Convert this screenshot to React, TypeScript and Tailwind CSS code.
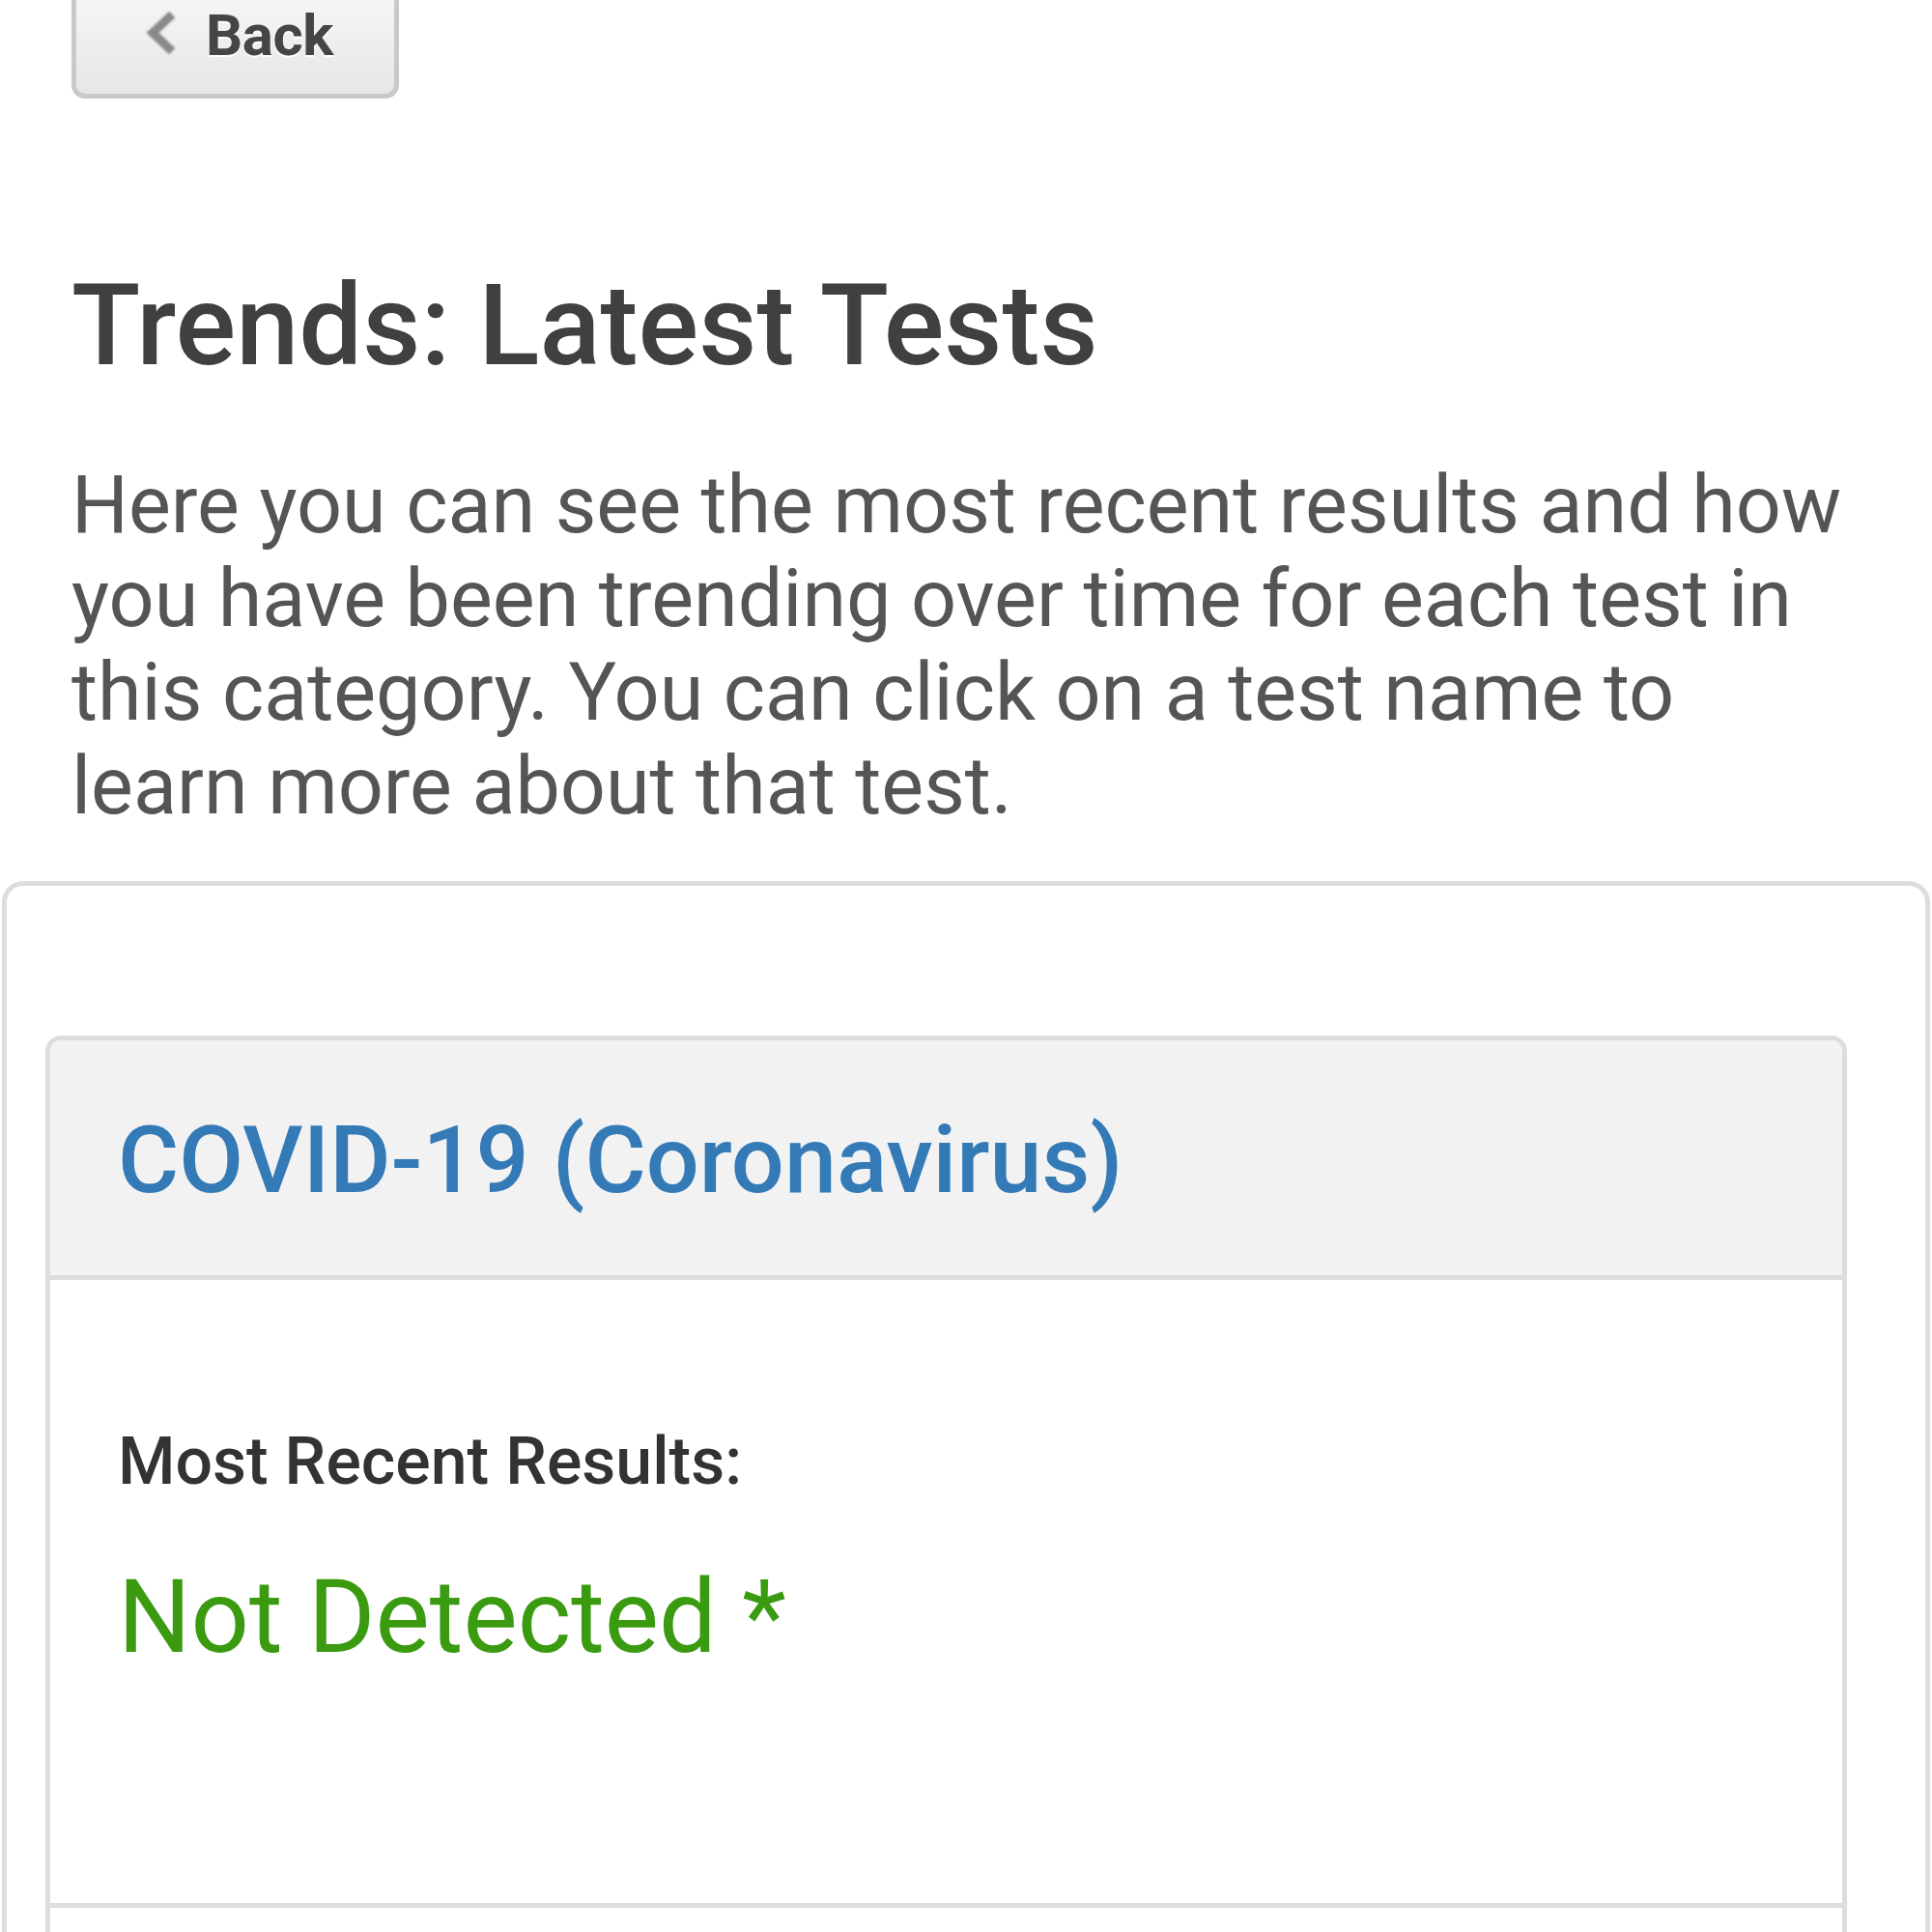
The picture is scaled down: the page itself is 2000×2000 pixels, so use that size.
import React from "react";

const BackButton = () => {
  return (
    <button className="-mt-[40px] ml-[74px] flex h-[142px] w-[339px] items-start rounded-b-[14px] border-[5px] border-[#c9c9c9] bg-gradient-to-b from-[#fbfbfb] to-[#e6e6e6] pl-[70px] pt-[37px]">
      <svg width="34" height="44" viewBox="0 0 34 44" className="mt-[10px] shrink-0 blur-[1px]">
        <polyline
          points="26,6 9,22 26,38"
          fill="none"
          stroke="#8a8a8a"
          strokeWidth="9"
          strokeLinecap="square"
        />
      </svg>
      <span className="ml-[30px] text-[60px] font-bold leading-[70px] tracking-[-0.5px] text-[#454545] [text-shadow:0_2px_0_#ffffff]">
        Back
      </span>
    </button>
  );
};

const TestCard = () => {
  return (
    <div className="ml-[40px] mt-[155px] w-[1865px] rounded-t-[16px] border-[5px] border-b-0 border-[#dddddd]">
      <div className="rounded-t-[12px] border-b-[5px] border-[#dddddd] bg-[#f2f2f2] pb-[65px] pl-[70px] pt-[70px]">
        <a className="text-[97px] font-medium leading-[108px] text-[#337ab7]">
          COVID-19 (Coronavirus)
        </a>
      </div>
      <div className="border-b-[5px] border-[#dddddd] pb-[237px] pl-[70px] pt-[148px]">
        <p className="text-[68px] font-medium leading-[80px] text-[#333333]">
          Most Recent Results:
        </p>
        <p className="mt-[62px] text-[106px] leading-[118px] text-[#3a9a10]">
          Not Detected *
        </p>
      </div>
      <div className="h-[200px]"></div>
    </div>
  );
};

const App = () => {
  return (
    <div className="h-[2000px] w-[2000px] overflow-hidden bg-white font-['Roboto',sans-serif]">
      <BackButton />
      <h1 className="ml-[74px] mt-[170px] text-[117px] font-medium leading-[130px] text-[#404040]">
        Trends: Latest Tests
      </h1>
      <p className="ml-[74px] mt-[72px] w-[1850px] text-[82.7px] leading-[97px] text-[#555555]">
        Here you can see the most recent results and how you have been
        trending over time for each test in this category. You can click on a
        test name to learn more about that test.
      </p>
      <div className="mx-[2px] mt-[50px] rounded-t-[22px] border-[5px] border-b-0 border-[#dddddd]">
        <TestCard />
      </div>
    </div>
  );
};

export default App;
